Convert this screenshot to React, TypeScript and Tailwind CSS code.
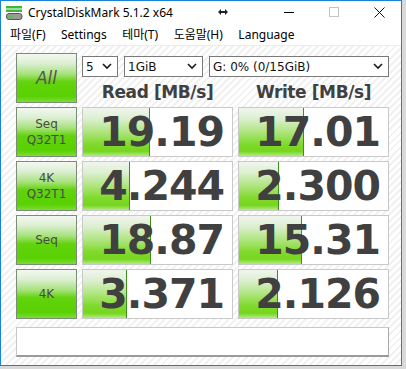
import React from "react";

const rows = [
  { label: ["Seq", "Q32T1"], read: "19.19", rw: 68, write: "17.01", ww: 66 },
  { label: ["4K", "Q32T1"], read: "4.244", rw: 48, write: "2.300", ww: 41 },
  { label: ["Seq"], read: "18.87", rw: 69, write: "15.31", ww: 64 },
  { label: ["4K"], read: "3.371", rw: 45, write: "2.126", ww: 40 },
];

function Chevron() {
  return (
    <svg width="10" height="7" viewBox="0 0 10 7" className="shrink-0">
      <polyline points="1,1 5,5 9,1" fill="none" stroke="#1a1a1a" strokeWidth="1.6" />
    </svg>
  );
}

function Select({ w, text }: { w: string; text: string }) {
  return (
    <div className={`${w} h-[21px] bg-white border border-[#7a7a7a] flex items-center justify-between pl-[3px] pr-[5px] text-[12px] text-[#111] leading-none`}>
      <span>{text}</span>
      <Chevron />
    </div>
  );
}

function ValueCell({ value, width }: { value: string; width: number }) {
  return (
    <div className="relative w-[151px] h-[50px] bg-white border border-[#c9c9c9] flex items-center justify-end pr-[8px] overflow-hidden">
      <div
        className="absolute left-0 top-0 bottom-0 border-r border-[#3f8f1f] bg-[linear-gradient(to_bottom,#f1f5ef_0%,#dcefd0_22%,#aee57e_50%,#80da2c_75%,#76d61e_90%,#b2ec80_100%)]"
        style={{ width: `${width - 1}px` }}
      />
      <span className="relative text-[41px] font-bold tracking-[-1px] text-[#404040] leading-none font-['DejaVu_Sans',sans-serif]">
        {value}
      </span>
    </div>
  );
}

function LabelBtn({ children, className = "" }: { children: React.ReactNode; className?: string }) {
  return (
    <div
      className={`w-[61px] h-[50px] border border-[#7b8c77] bg-[linear-gradient(to_bottom,#f3f8f1_0%,#dcefd2_20%,#a6e27a_42%,#62d30c_58%,#58d102_88%,#7ddd33_100%)] flex flex-col items-center justify-center text-[#4a4a4a] leading-[16px] ${className}`}
    >
      {children}
    </div>
  );
}

export default function App() {
  return (
    <div className="w-[406px] h-[369px] bg-[#d9d9d9] font-['DejaVu_Sans',sans-serif]">
      <div className="w-[402px] h-[366px] border border-[#1883d7] bg-white flex flex-col">
        {/* title bar */}
        <div className="h-[24px] flex items-center relative font-['Noto_Sans',sans-serif] text-[12px] text-black">
          <svg width="17" height="14" viewBox="0 0 17 14" className="ml-[5px]">
            <rect x="0" y="0" width="16" height="2.5" fill="#3fb83a" />
            <rect x="0" y="3.5" width="16" height="2.5" fill="#3fb83a" />
            <rect x="0.5" y="7.5" width="15.5" height="6" rx="2.5" fill="#9a9a9a" stroke="#555" strokeWidth="1" />
            <rect x="2.5" y="9.5" width="4" height="2" fill="#3fcf3a" />
          </svg>
          <span className="ml-[5px]">CrystalDiskMark 5.1.2 x64</span>
          <svg width="10" height="6" viewBox="0 0 10 6" className="absolute left-[217px] top-[8px]">
            <path d="M0 3 L3 0 L3 2 L7 2 L7 0 L10 3 L7 6 L7 4 L3 4 L3 6 Z" fill="#222" />
          </svg>
          <div className="absolute left-[283px] top-[11px] w-[10px] h-[1px] bg-black" />
          <div className="absolute left-[328px] top-[6px] w-[10px] h-[10px] border border-[#c4c4c4]" />
          <svg width="11" height="11" viewBox="0 0 11 11" className="absolute left-[373px] top-[6px]">
            <path d="M0.5 0.5 L10.5 10.5 M10.5 0.5 L0.5 10.5" stroke="#111" strokeWidth="1" />
          </svg>
        </div>
        {/* menu */}
        <div className="h-[21px] flex items-center text-[12px] text-black font-['Noto_Sans','Noto_Sans_CJK_KR',sans-serif] pl-[9px] gap-[15.5px] border-b border-[#ececec]">
          <span>파일(F)</span>
          <span>Settings</span>
          <span>테마(T)</span>
          <span>도움말(H)</span>
          <span>Language</span>
        </div>
        {/* content */}
        <div className="flex-1 bg-[repeating-linear-gradient(135deg,#ffffff_0px,#ffffff_3px,#f1f1f1_3px,#f1f1f1_5px)] pl-[15px] pt-[7px] flex flex-col gap-[4px]">
          <div className="flex gap-[5px]">
            <LabelBtn>
              <span className="italic text-[17px] text-[#555]">All</span>
            </LabelBtn>
            <div className="flex flex-col">
              <div className="flex gap-[6px] mt-[3px]">
                <Select w="w-[36px]" text="5" />
                <Select w="w-[79px]" text="1GiB" />
                <Select w="w-[180px]" text="G: 0% (0/15GiB)" />
              </div>
              <div className="flex gap-[5px] mt-[5px] text-[17px] font-bold text-[#404040] tracking-[-0.4px] leading-[20px]">
                <div className="w-[151px] text-center">Read [MB/s]</div>
                <div className="w-[151px] text-center">Write [MB/s]</div>
              </div>
            </div>
          </div>
          {rows.map((r, i) => (
            <div key={i} className="flex gap-[5px]">
              <LabelBtn>
                {r.label.map((l) => (
                  <span key={l} className="text-[12px]">
                    {l}
                  </span>
                ))}
              </LabelBtn>
              <ValueCell value={r.read} width={r.rw} />
              <ValueCell value={r.write} width={r.ww} />
            </div>
          ))}
          <div className="mt-[4px] w-[373px] h-[30px] bg-white border border-[#c8c8c8] border-b-2 border-b-[#9a9a9a] border-r-[#a8a8a8]" />
        </div>
      </div>
    </div>
  );
}
